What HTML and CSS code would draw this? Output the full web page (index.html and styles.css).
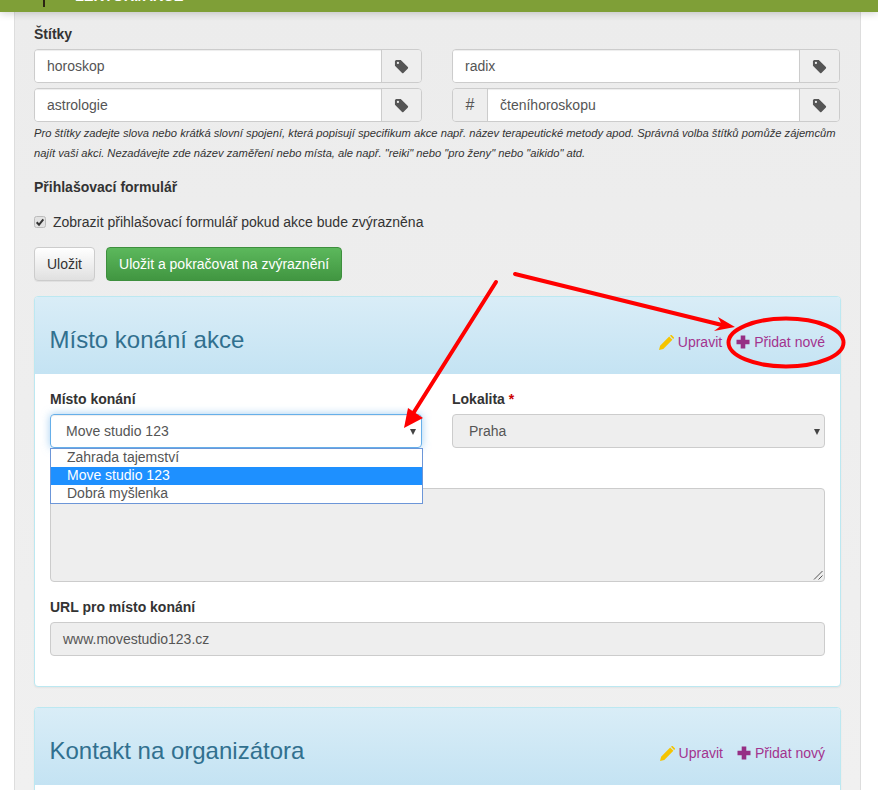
FILE: index.html
```html
<!DOCTYPE html>
<html lang="cs">
<head>
    <meta charset="UTF-8">
    <title>Úprava akce</title>
    <link rel="stylesheet" href="styles.css">
</head>
<body>
    <div class="topbar">
        <span class="topbar-mark"></span>
        <span class="topbar-text">LEKTOŘI/AKCE</span>
    </div>
    <div class="page">
        <h5 class="section-label">Štítky</h5>
        <div class="tag-grid">
            <div class="input-group">
                <div class="field">horoskop</div>
                <div class="addon"><svg class="tag-icon" viewBox="0 0 16 16"><path d="M1 2.2 2.2 1h5l7.6 7.6a1 1 0 0 1 0 1.4l-4.8 4.8a1 1 0 0 1-1.4 0L1 7.200zM4.200 3a1.200 1.200 0 1 0 0 2.400 1.200 1.200 0 0 0 0-2.400z"/></svg></div>
            </div>
            <div class="input-group">
                <div class="field">radix</div>
                <div class="addon"><svg class="tag-icon" viewBox="0 0 16 16"><path d="M1 2.2 2.2 1h5l7.6 7.6a1 1 0 0 1 0 1.4l-4.800 4.800a1 1 0 0 1-1.400 0L1 7.200zM4.200 3a1.200 1.200 0 1 0 0 2.400 1.200 1.200 0 0 0 0-2.400z"/></svg></div>
            </div>
            <div class="input-group">
                <div class="field">astrologie</div>
                <div class="addon"><svg class="tag-icon" viewBox="0 0 16 16"><path d="M1 2.2 2.2 1h5l7.6 7.6a1 1 0 0 1 0 1.4l-4.800 4.800a1 1 0 0 1-1.400 0L1 7.200zM4.200 3a1.200 1.200 0 1 0 0 2.400 1.200 1.200 0 0 0 0-2.400z"/></svg></div>
            </div>
            <div class="input-group">
                <div class="addon addon-left">#</div>
                <div class="field">čteníhoroskopu</div>
                <div class="addon"><svg class="tag-icon" viewBox="0 0 16 16"><path d="M1 2.2 2.2 1h5l7.6 7.6a1 1 0 0 1 0 1.4l-4.800 4.800a1 1 0 0 1-1.400 0L1 7.200zM4.200 3a1.200 1.200 0 1 0 0 2.400 1.200 1.200 0 0 0 0-2.400z"/></svg></div>
            </div>
        </div>
        <p class="help">Pro štítky zadejte slova nebo krátká slovní spojení, která popisují specifikum akce např. název terapeutické metody apod. Správná volba štítků pomůže zájemcům najít vaši akci. Nezadávejte zde název zaměření nebo místa, ale např. "reiki" nebo "pro ženy" nebo "aikido" atd.</p>

        <h5 class="section-label form-label">Přihlašovací formulář</h5>
        <label class="check">
            <svg class="check-box" viewBox="0 0 12 12"><rect x="0.5" y="0.5" width="11" height="11" rx="2" fill="#e2e2e2" stroke="#bbb"/><path d="M2.700 6.300 5 8.800 9.300 3.300" fill="none" stroke="#333" stroke-width="2"/></svg>
            Zobrazit přihlašovací formulář pokud akce bude zvýrazněna
        </label>
        <div class="buttons">
            <div class="btn btn-default">Uložit</div>
            <div class="btn btn-success">Uložit a pokračovat na zvýraznění</div>
        </div>

        <div class="panel">
            <div class="panel-heading">
                <h3>Místo konání akce</h3>
                <div class="actions">
                    <span class="action"><svg class="icon icon-pencil" viewBox="0 0 14 14"><path fill="#f5c400" d="M0 14l1-4 8.500-8.500 3 3L4 13zM10.300.800 11 .1q.6-.3 1 .1l1.800 1.800q.4.4.1 1l-.7.700z"/></svg>Upravit</span>
                    <span class="action"><svg class="icon" viewBox="0 0 14 14"><path fill="#962f84" d="M4.700.5h4.600v4.200h4.200v4.600H9.300v4.200H4.700V9.300H.5V4.700h4.200z"/></svg>Přidat nové</span>
                </div>
            </div>
            <div class="panel-body">
                <div class="two-cols">
                    <div>
                        <div class="label">Místo konání</div>
                        <div class="select select-open">Move studio 123<span class="caret"></span></div>
                    </div>
                    <div>
                        <div class="label">Lokalita <span class="required">*</span></div>
                        <div class="select select-disabled">Praha<span class="caret"></span></div>
                    </div>
                </div>
                <div class="textarea">
                    <svg class="resize" viewBox="0 0 10 10"><path d="M9.500 1 1 9.500M9.500 5.500 5.500 9.500" stroke="#555" fill="none"/></svg>
                </div>
                <div class="label url-label">URL pro místo konání</div>
                <div class="url-input">www.movestudio123.cz</div>
            </div>
        </div>

        <div class="panel panel-next">
            <div class="panel-heading">
                <h3>Kontakt na organizátora</h3>
                <div class="actions">
                    <span class="action"><svg class="icon icon-pencil" viewBox="0 0 14 14"><path fill="#f5c400" d="M0 14l1-4 8.500-8.500 3 3L4 13zM10.300.800 11 .1q.6-.3 1 .1l1.800 1.800q.4.4.1 1l-.7.700z"/></svg>Upravit</span>
                    <span class="action"><svg class="icon" viewBox="0 0 14 14"><path fill="#962f84" d="M4.700.5h4.600v4.200h4.200v4.600H9.300v4.200H4.700V9.300H.5V4.700h4.200z"/></svg>Přidat nový</span>
                </div>
            </div>
        </div>
    </div>

    <!-- dropdown list of the open select -->
    <div class="dropdown">
        <div class="option">Zahrada tajemství</div>
        <div class="option option-active">Move studio 123</div>
        <div class="option">Dobrá myšlenka</div>
    </div>

    <!-- red annotations drawn over the screenshot -->
    <svg class="annotations" viewBox="0 0 878 790">
        <g fill="none" stroke="#f00" stroke-width="4" stroke-linecap="round">
            <path d="M515 274 722 325"/>
            <path d="M496 282 414 412"/>
            <ellipse cx="786" cy="342.500" rx="57.500" ry="24"/>
        </g>
        <path fill="#f00" d="M735 327 718 317 722 325 714 331z"/>
        <path fill="#f00" d="M404 428 408 408 414 412 423 418z"/>
    </svg>
</body>
</html>
```

FILE: styles.css
```css
* {
    box-sizing: border-box;
}
html, body {
    margin: 0;
    height: 790px;
    overflow: hidden;
}
body {
    position: relative;
    font-family: "Liberation Sans", Arial, sans-serif;
    font-size: 14px;
    line-height: 20px;
    color: #333;
    background-color: #fff;
}
.topbar {
    position: relative;
    z-index: 2;
    height: 12px;
    background-color: #7f9f37;
    box-shadow: 0 1px 8px rgba(0, 0, 0, 0.2);
    overflow: hidden;
}
.topbar-mark {
    position: absolute;
    left: 43px;
    top: 0;
    width: 2px;
    height: 7px;
    background-color: #2b2413;
}
.topbar-text {
    position: absolute;
    left: 75px;
    top: -14px;
    font-size: 14.500px;
    font-weight: bold;
    color: #fff;
}
.page {
    width: 847px;
    height: 778px;
    margin-left: 14px;
    padding: 0 19px;
    background-image: linear-gradient(to bottom, #ececec, #f0f0f0);
    border-left: 1px solid #ddd;
    border-right: 1px solid #ddd;
    overflow: hidden;
}
.section-label {
    margin: 0;
    padding-top: 12px;
    font-size: 14px;
    font-weight: bold;
    line-height: 20px;
}
.tag-grid {
    display: grid;
    grid-template-columns: 388px 388px;
    column-gap: 30px;
    row-gap: 5px;
    margin-top: 5px;
}
.input-group {
    display: flex;
    height: 34px;
    border: 1px solid #ccc;
    border-radius: 4px;
    overflow: hidden;
}
.field {
    flex: 1;
    padding: 6px 12px;
    background-color: #fff;
    color: #555;
    box-shadow: inset 0 1px 1px rgba(0, 0, 0, 0.075);
}
.addon {
    display: flex;
    align-items: center;
    justify-content: center;
    width: 40px;
    background-color: #eee;
    border-left: 1px solid #ccc;
    color: #555;
}
.addon-left {
    width: 35px;
    border-left: 0;
    border-right: 1px solid #ccc;
    font-size: 16px;
}
.tag-icon {
    width: 15px;
    height: 15px;
    fill: #555;
}
.help {
    margin: 1px 0 0;
    font-size: 11.200px;
    font-style: italic;
    line-height: 20px;
}
.form-label {
    padding-top: 14px;
}
.check {
    display: flex;
    align-items: center;
    gap: 7px;
    margin-top: 15px;
}
.check-box {
    width: 12px;
    height: 12px;
}
.buttons {
    display: flex;
    gap: 11px;
    margin-top: 15px;
}
.btn {
    height: 34px;
    padding: 6px 12px;
    border: 1px solid #ccc;
    border-radius: 4px;
}
.btn-default {
    background-image: linear-gradient(to bottom, #fff, #e0e0e0);
    border-color: #ccc;
    box-shadow: 0 1px 0 rgba(0, 0, 0, 0.05);
}
.btn-success {
    background-image: linear-gradient(to bottom, #5cb85c, #419641);
    border-color: #3e8f3e;
    color: #fff;
}
.panel {
    width: 807px;
    margin-top: 15px;
    background-color: #fff;
    border: 1px solid #bce8f1;
    border-radius: 4px;
    box-shadow: 0 1px 2px rgba(0, 0, 0, 0.05);
}
.panel-next {
    margin-top: 20px;
    height: 90px;
}
.panel-heading {
    display: flex;
    align-items: center;
    justify-content: space-between;
    height: 77px;
    padding: 9px 15px 0 14.500px;
    background-image: linear-gradient(to bottom, #d9edf7, #c4e3f3);
    border-radius: 3px 3px 0 0;
}
.panel-heading h3 {
    margin: 0;
    font-size: 24px;
    font-weight: normal;
    line-height: 26px;
    color: #31708f;
}
.actions {
    display: flex;
    gap: 14px;
    padding-top: 4px;
    color: #a3338e;
}
.action {
    display: flex;
    align-items: center;
    gap: 4px;
}
.icon {
    width: 14px;
    height: 14px;
}
.icon-pencil {
    width: 15px;
    height: 15px;
}
.panel-body {
    padding: 15px 15px 30px;
}
.two-cols {
    display: grid;
    grid-template-columns: 372px 373px;
    column-gap: 30px;
}
.label {
    font-weight: bold;
    margin-bottom: 5px;
}
.required {
    color: #c00;
}
.select {
    position: relative;
    height: 34px;
    padding: 6px 16px;
    border: 1px solid #ccc;
    border-radius: 4px;
    color: #555;
}
.select-open {
    padding-left: 15px;
    border-color: #66afe9;
    box-shadow: inset 0 1px 1px rgba(0, 0, 0, 0.075), 0 0 8px rgba(102, 175, 233, 0.6);
}
.select-open .caret {
    right: 5px;
}
.select-disabled {
    background-color: #eee;
}
.caret {
    position: absolute;
    right: 4px;
    top: 14px;
    border-top: 6px solid #444;
    border-left: 3.500px solid transparent;
    border-right: 3.500px solid transparent;
}
.textarea {
    position: relative;
    height: 94px;
    margin-top: 40px;
    background-color: #eee;
    border: 1px solid #ccc;
    border-radius: 4px;
}
.resize {
    position: absolute;
    right: 1px;
    bottom: 1px;
    width: 10px;
    height: 10px;
}
.url-label {
    margin-top: 15px;
}
.url-input {
    height: 34px;
    padding: 6px 12px;
    background-color: #eee;
    border: 1px solid #ccc;
    border-radius: 4px;
    color: #555;
}
.dropdown {
    position: absolute;
    left: 50px;
    top: 448px;
    width: 373px;
    height: 56px;
    background-color: #fff;
    border: 1px solid #6c96d8;
    z-index: 3;
}
.option {
    height: 18px;
    padding-left: 16px;
    line-height: 17px;
    color: #555;
}
.option-active {
    background-color: #1e90ff;
    color: #fff;
}
.annotations {
    position: absolute;
    left: 0;
    top: 0;
    width: 878px;
    height: 790px;
    z-index: 4;
    pointer-events: none;
}
```
